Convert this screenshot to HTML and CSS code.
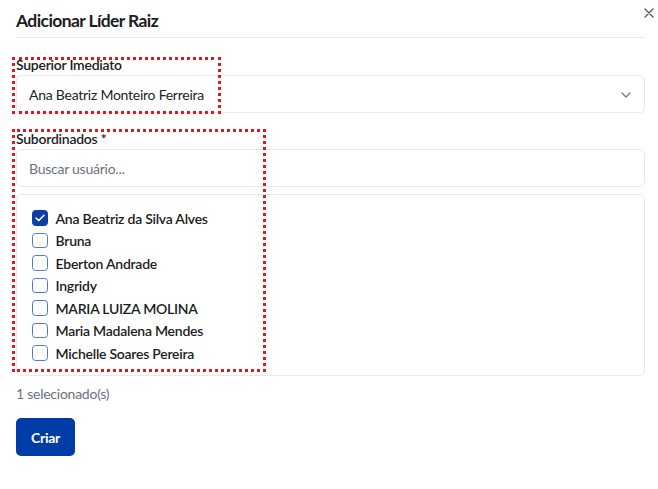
FILE: index.html
```html
<!DOCTYPE html>
<html lang="pt-BR">
<head>
<meta charset="utf-8">
<title>Adicionar Líder Raiz</title>
<link rel="stylesheet" href="styles.css">
</head>
<body>
<div class="dialog">
  <header class="header">
    <h2 class="title">Adicionar Líder Raiz</h2>
    <button class="close" aria-label="Fechar">
      <svg width="10" height="10" viewBox="0 0 10 10"><path d="M1 1L9 9M9 1L1 9" stroke="#4b5563" stroke-width="1.3" stroke-linecap="round"/></svg>
    </button>
  </header>

  <div class="form">
    <div class="field">
      <label class="label">Superior Imediato</label>
      <div class="select">
        <span>Ana Beatriz Monteiro Ferreira</span>
        <svg class="chev" width="10" height="6" viewBox="0 0 10 6"><path d="M1 1L5 5L9 1" fill="none" stroke="#6b7280" stroke-width="1.2" stroke-linecap="round" stroke-linejoin="round"/></svg>
      </div>
      <div class="mark mark-a"></div>
    </div>

    <div class="field field-sub">
      <label class="label">Subordinados *</label>
      <div class="input"><span class="placeholder">Buscar usuário...</span></div>
      <div class="list">
        <label class="item"><span class="cb checked"><svg width="10" height="8" viewBox="0 0 10 8"><path d="M1 4L3.8 6.6L9 1.2" fill="none" stroke="#fff" stroke-width="1.5" stroke-linecap="round" stroke-linejoin="round"/></svg></span>Ana Beatriz da Silva Alves</label>
        <label class="item"><span class="cb"></span>Bruna</label>
        <label class="item"><span class="cb"></span>Eberton Andrade</label>
        <label class="item"><span class="cb"></span>Ingridy</label>
        <label class="item"><span class="cb"></span>MARIA LUIZA MOLINA</label>
        <label class="item"><span class="cb"></span>Maria Madalena Mendes</label>
        <label class="item"><span class="cb"></span>Michelle Soares Pereira</label>
      </div>
      <div class="mark mark-b"></div>
    </div>

    <p class="count">1 selecionado(s)</p>
    <div><button class="btn">Criar</button></div>
  </div>
</div>
</body>
</html>
```

FILE: styles.css
```css
* { box-sizing: border-box; }
html, body { margin: 0; padding: 0; background: #fff; }
body {
  font-family: Lato, "Noto Sans", "Liberation Sans", sans-serif;
  color: #1f2328;
  font-size: 14px;
  letter-spacing: -0.25px;
}
.dialog {
  padding: 8px 13px 0 16px;
}
.header {
  display: flex;
  justify-content: space-between;
  align-items: flex-start;
  border-bottom: 1px solid #e8eaef;
  height: 30px;
}
.title {
  margin: 0;
  font-size: 17.5px;
  font-weight: 700;
  line-height: 26px;
  letter-spacing: -0.6px;
  color: #1a1d21;
}
.close {
  border: 0;
  background: none;
  padding: 0;
  margin: 0 -9px 0 0;
  width: 10px;
  height: 10px;
  display: flex;
  cursor: pointer;
}
.form {
  padding-top: 17px;
  display: flex;
  flex-direction: column;
}
.field {
  position: relative;
  display: flex;
  flex-direction: column;
}
.field-sub { margin-top: 16px; }
.label {
  font-size: 14px;
  font-weight: 600;
  line-height: 20px;
  color: #1a1d21;
}
.select, .input {
  height: 38px;
  border: 1px solid #e5e8ef;
  border-radius: 5px;
  display: flex;
  align-items: center;
  justify-content: space-between;
  padding: 0 13px 0 12px;
  font-size: 14px;
  color: #1f2328;
}
.chev { margin-top: 1px; }
.placeholder { color: #6b7280; }
.list {
  margin-top: 7px;
  border: 1px solid #e5e8ef;
  border-radius: 5px;
  padding: 13px 15px 12px;
  display: flex;
  flex-direction: column;
  gap: 2.5px;
}
.item {
  display: flex;
  align-items: center;
  gap: 8px;
  height: 20px;
  font-weight: 600;
  font-size: 14px;
  color: #1a1d21;
}
.cb {
  width: 15.5px;
  height: 15.5px;
  border: 1.5px solid #4a7bd0;
  border-radius: 3.5px;
  display: flex;
  align-items: center;
  justify-content: center;
  flex: none;
}
.cb.checked {
  background: #0d3ea8;
  border-color: #0d3ea8;
}
.count {
  margin: 8px 0 0;
  line-height: 20px;
  color: #6b7280;
  font-size: 14px;
}
.btn {
  margin-top: 14px;
  height: 38px;
  padding: 0 15px;
  border: 0;
  border-radius: 5px;
  background: #003ca6;
  color: #fff;
  font-family: inherit;
  font-size: 14px;
  font-weight: 700;
  letter-spacing: inherit;
}
.mark {
  position: absolute;
  border: 3px dotted #e8141c;
  pointer-events: none;
}
.mark-a { left: -4px; top: 2px; width: 209px; height: 57px; }
.mark-b { left: -4px; top: 0; width: 254px; height: 243px; }
```
